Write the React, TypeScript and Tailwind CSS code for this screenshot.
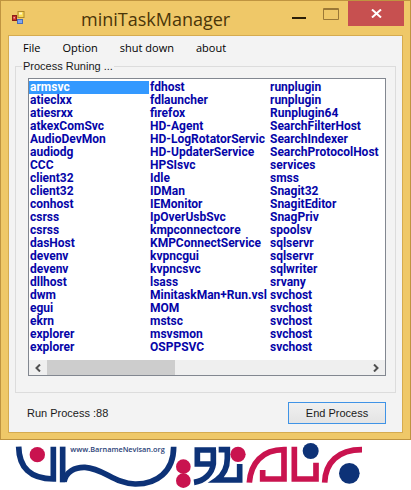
import { useState } from 'react';

const processes = [
  'armsvc', 'atieclxx', 'atiesrxx', 'atkexComSvc', 'AudioDevMon', 'audiodg', 'CCC',
  'client32', 'client32', 'conhost', 'csrss', 'csrss', 'dasHost', 'devenv', 'devenv',
  'dllhost', 'dwm', 'egui', 'ekrn', 'explorer', 'explorer',
  'fdhost', 'fdlauncher', 'firefox', 'HD-Agent', 'HD-LogRotatorServic', 'HD-UpdaterService', 'HPSIsvc',
  'Idle', 'IDMan', 'IEMonitor', 'IpOverUsbSvc', 'kmpconnectcore', 'KMPConnectService', 'kvpncgui', 'kvpncsvc',
  'lsass', 'MinitaskMan+Run.vsl', 'MOM', 'mstsc', 'msvsmon', 'OSPPSVC',
  'runplugin', 'runplugin', 'Runplugin64', 'SearchFilterHost', 'SearchIndexer', 'SearchProtocolHost', 'services',
  'smss', 'Snagit32', 'SnagitEditor', 'SnagPriv', 'spoolsv', 'sqlservr', 'sqlservr', 'sqlwriter',
  'srvany', 'svchost', 'svchost', 'svchost', 'svchost', 'svchost',
];

const menuItems = ['File', 'Option', 'shut down', 'about'];

function AppIcon() {
  return (
    <svg width="13" height="14" viewBox="0 0 13 14" aria-hidden="true">
      <rect x="0.5" y="4.5" width="4" height="5" fill="#c9302c" stroke="#8c1d18" />
      <rect x="6" y="0.5" width="6" height="6" fill="#fbdc55" stroke="#b08a2c" />
      <rect x="7" y="1.5" width="3" height="2" fill="#fff6c4" />
      <rect x="5.5" y="8.5" width="5" height="4" fill="#7fa6ee" stroke="#4a6db8" />
      <rect x="1.5" y="6" width="1.5" height="1.5" fill="#f3a59c" />
    </svg>
  );
}

function TitleBar() {
  return (
    <header className="flex h-[34px] items-start">
      <div className="pt-2.5 pl-[11px]">
        <AppIcon />
      </div>
      <h1 className="flex-1 pt-1 pl-14 font-['Open_Sans',sans-serif] text-lg leading-7 text-[#4a3508]">
        miniTaskManager
      </h1>
      <button type="button" aria-label="Minimize" className="flex h-[25px] w-8 items-center justify-center pt-2">
        <svg width="14" height="2" viewBox="0 0 14 2" aria-hidden="true">
          <path d="M0 1h14" stroke="#2b1e08" strokeWidth="2" />
        </svg>
      </button>
      <button type="button" aria-label="Maximize" className="flex h-[25px] w-8 items-center justify-center">
        <svg width="16" height="12" viewBox="0 0 16 12" aria-hidden="true">
          <path d="M0.5 0.5h15v11h-15zM0 1.5h16" fill="none" stroke="#9b7836" />
        </svg>
      </button>
      <button
        type="button"
        aria-label="Close"
        className="mr-1.5 ml-px flex h-[25px] w-14 items-center justify-center bg-[#c75050]"
      >
        <svg width="11" height="9" viewBox="0 0 11 9" aria-hidden="true">
          <path d="M1 0.5l9 8M10 0.5l-9 8" stroke="#fff" strokeWidth="2" />
        </svg>
      </button>
    </header>
  );
}

function ScrollBar() {
  return (
    <div className="mt-1.5 flex h-[15px] bg-[#efefef]">
      <button type="button" aria-label="Scroll left" className="flex w-[18px] items-center justify-center">
        <svg width="6" height="8" viewBox="0 0 6 8" aria-hidden="true">
          <path d="M5 0.5L1.5 4L5 7.5" fill="none" stroke="#505050" strokeWidth="2" />
        </svg>
      </button>
      <div className="flex-1">
        <div className="h-full w-32 bg-[#cdcdcd]" />
      </div>
      <button type="button" aria-label="Scroll right" className="flex w-[18px] items-center justify-center">
        <svg width="6" height="8" viewBox="0 0 6 8" aria-hidden="true">
          <path d="M1 0.5L4.5 4L1 7.5" fill="none" stroke="#505050" strokeWidth="2" />
        </svg>
      </button>
    </div>
  );
}

function SiteLogo() {
  return (
    <svg className="mx-[15px] block" width="348" height="50" viewBox="45 0 1044 150" fill="none" aria-hidden="true">
      <g stroke="#0d3277" strokeWidth="17">
        <path d="M56 20C57 82 90 117 160 117V20" />
        <path d="M188 20V127" />
        <path d="M192 125C198 95 225 81 255 82C310 85 345 131 405 132C470 133 521 95 521 20" />
        <path d="M640 72H592V30H648" />
        <path d="M640 30V72C636 102 612 123 582 127" />
        <path d="M656 29H682V55C682 84 670 106 650 120H719V72" />
      </g>
      <g stroke="#c9134f" strokeWidth="17">
        <path d="M748 128C752 70 786 29 852 29V117H788V90" />
        <path d="M883 20V117H948V68" />
        <path d="M974 128C976 68 1014 29 1086 29" />
      </g>
      <g fill="#c9134f">
        <circle cx="112" cy="44" r="23" />
        <circle cx="550" cy="80" r="22" />
        <circle cx="550" cy="122" r="22" />
        <circle cx="714" cy="43" r="23" />
      </g>
      <g fill="#0d3277">
        <circle cx="932" cy="33" r="24" />
        <circle cx="1048" cy="100" r="31" />
      </g>
      <text x="211" y="37" fill="#2b3f78" fontFamily="'Open Sans', sans-serif" fontSize="22" fontWeight="600">
        www.BarnameNevisan.org
      </text>
    </svg>
  );
}

export default function App() {
  const [selected, setSelected] = useState(0);

  return (
    <div className="min-h-screen bg-white font-['Liberation_Sans',Arial,sans-serif] text-[11px] text-[#1a1a1a]">
      <main className="border border-[#bf9440] bg-[#efc868] pb-1.5">
        <TitleBar />

        <div className="mx-[7px] border border-[#d5ab50] bg-[#f3f3f3] px-1.5 pb-2">
          <nav className="flex h-6 items-center gap-[22px] pl-2 font-['Open_Sans',sans-serif] text-[11px] text-black">
            {menuItems.map((item) => (
              <button key={item} type="button">
                {item}
              </button>
            ))}
          </nav>

          {/* Process list */}
          <fieldset className="min-w-0 border border-[#dcdcdc] pr-[9px] pb-4 pl-3">
            <legend className="-ml-1.5 px-px leading-3">Process Runing ...</legend>
            <div className="mt-1.5 border border-[#828790] bg-white pt-0.5">
              <div className="grid grid-flow-col grid-cols-[120px_120px_minmax(0,1fr)] grid-rows-[repeat(21,13px)] overflow-hidden font-['Roboto',sans-serif] text-xs leading-[13px] font-bold text-[#0505a8]">
                {processes.map((name, index) => (
                  <label
                    key={index}
                    className="overflow-hidden pl-px whitespace-nowrap has-checked:bg-[#3399ff] has-checked:text-white"
                  >
                    <input
                      type="radio"
                      name="process"
                      className="sr-only"
                      checked={selected === index}
                      onChange={() => setSelected(index)}
                    />
                    {name}
                  </label>
                ))}
              </div>
              <ScrollBar />
            </div>
          </fieldset>

          <div className="mt-[9px] flex items-center justify-between pr-2.5 pl-3">
            <p>Run Process :88</p>
            <button
              type="button"
              className="h-[22px] w-[98px] border border-[#3f93e6] bg-linear-to-b from-[#f0f0f0] to-[#e4e4e4]"
            >
              End Process
            </button>
          </div>
        </div>
      </main>

      <SiteLogo />
    </div>
  );
}
